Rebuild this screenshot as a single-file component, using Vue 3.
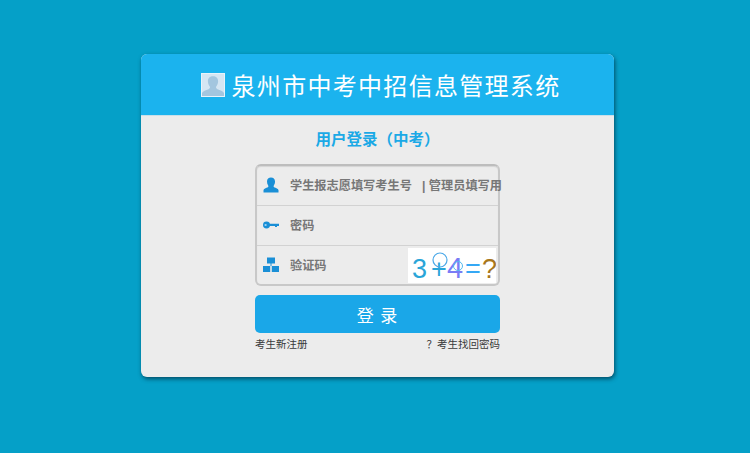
<template>
  <div class="page">
    <div class="card">
      <div class="card-head">
        <svg class="avatar" viewBox="0 0 24 24" width="24" height="24">
          <rect x="0.5" y="0.5" width="23" height="23" fill="#d5e6f3" stroke="#e8f3fa" />
          <path d="M1 23v-3c1-2 4-2.600 6.500-3.800 1.500-.7 1.700-1.700 1.300-2.700-1.300-1.500-1.900-3.300-1.900-5.500C6.900 5 9 3.200 12 3.200s5.100 1.800 5.100 4.800c0 2.200-.6 4-1.900 5.500-.4 1-.2 2 1.300 2.700 2.500 1.200 5.500 1.800 6.500 3.800v3z" fill="#a3c6df" />
        </svg>
        <h1>泉州市中考中招信息管理系统</h1>
      </div>
      <div class="card-body">
        <h2>用户登录（中考）</h2>
        <div class="form">
          <div class="fields">
            <div class="field">
              <svg class="icon" viewBox="0 0 16 16" width="16" height="16">
                <path d="M0.500 15.500v-2.300c0-1.500 2.600-2.300 4.500-3 .5-.5.500-1.100.2-1.700C4.400 7.500 4 6.200 4 4.600 4 2 5.700.5 8 .5s4 1.500 4 4.100c0 1.600-.4 2.900-1.200 3.900-.3.600-.3 1.200.2 1.700 1.900.7 4.500 1.500 4.500 3v2.300z" fill="#1a8fd6" />
              </svg>
              <span class="hint">学生报志愿填写考生号 &nbsp;&nbsp;| 管理员填写用</span>
            </div>
            <div class="field">
              <svg class="icon" viewBox="0 0 16 16" width="16" height="16">
                <ellipse cx="3.500" cy="8" rx="3.500" ry="3.400" fill="#1a8fd6" />
                <ellipse cx="2.600" cy="8" rx="1.200" ry="0.800" fill="#d8ecf8" />
                <path d="M6 6.800h10v2.200h-2v1h-2V9H6z" fill="#1a8fd6" />
              </svg>
              <span class="hint">密码</span>
            </div>
            <div class="field">
              <svg class="icon" viewBox="0 0 16 16" width="16" height="16">
                <rect x="4" y="0.500" width="8" height="6" fill="#1a8fd6" />
                <rect x="7.500" y="6" width="1" height="3" fill="#1a8fd6" />
                <rect x="0" y="9" width="7.200" height="6" fill="#1a8fd6" />
                <rect x="8.800" y="9" width="7.200" height="6" fill="#1a8fd6" />
              </svg>
              <span class="hint">验证码</span>
              <svg class="captcha" viewBox="0 0 88 36" width="88" height="36">
                <rect width="88" height="35" fill="#fff" />
                <text x="4" y="30" font-size="27" fill="#2aa5d8">3</text>
                <text x="23" y="30" font-size="27" fill="#2aa5d8">+</text>
                <circle cx="32" cy="12" r="7" fill="none" stroke="#4aa8e8" stroke-width="1.200" />
                <text x="39" y="30" font-size="29" fill="#7a7cf5">4</text>
                <circle cx="50" cy="18" r="4.500" fill="none" stroke="#54b8ee" stroke-width="1" />
                <text x="57" y="30" font-size="27" fill="#35a8f5">=</text>
                <text x="74" y="30" font-size="27" fill="#a8771c">?</text>
              </svg>
            </div>
          </div>
          <button class="submit" type="button">登 录</button>
          <div class="links">
            <a>考生新注册</a>
            <a>？考生找回密码</a>
          </div>
        </div>
      </div>
    </div>
  </div>
</template>

<script setup>
</script>

<style>
html,
body {
  margin: 0;
  background: #05a0c8;
}
</style>

<style scoped>
.page {
  height: 453px;
  box-sizing: border-box;
  padding: 54px 0 0 141px;
  overflow: hidden;
  font-family: "Liberation Sans", "Noto Sans CJK SC", sans-serif;
}

.card {
  width: 473px;
  height: 323px;
  background: #ececec;
  border-radius: 6px;
  box-shadow: 1px 2px 4px rgba(0, 50, 70, 0.75);
  overflow: hidden;
}

.card-head {
  height: 61px;
  background: #1bb3ee;
  border-bottom: 1px solid #c9dfe9;
  display: flex;
  align-items: center;
  justify-content: center;
  gap: 7px;
  padding-left: 6px;
}

.avatar {
  flex: none;
}

h1 {
  margin: 0;
  font-size: 24px;
  font-weight: 400;
  letter-spacing: 1.300px;
  color: #fff;
}

.card-body {
  display: flex;
  flex-direction: column;
  align-items: center;
}

h2 {
  margin: 14px 0 14px;
  font-size: 15.500px;
  line-height: 20px;
  font-weight: 700;
  color: #1ba9e6;
}

.form {
  width: 245px;
}

.fields {
  height: 122px;
  box-sizing: border-box;
  border: 2px solid #c8c8c8;
  border-top-color: #bdbdbd;
  border-radius: 6px;
  box-shadow: inset 0 1px 1px rgba(0, 0, 0, 0.1);
}

.field {
  height: 40px;
  box-sizing: border-box;
  display: flex;
  align-items: center;
  padding: 0 0 2px 6px;
  border-bottom: 1px solid #d2d2d2;
  position: relative;
  white-space: nowrap;
}

.field:last-child {
  border-bottom: 0;
}

.icon {
  flex: none;
  margin-right: 11px;
}

.hint {
  font-size: 12.200px;
  font-weight: 700;
  color: #777;
}

.captcha {
  position: absolute;
  right: 2px;
  top: 2px;
  font-family: "Liberation Sans", sans-serif;
}

.submit {
  display: block;
  width: 245px;
  height: 38px;
  margin-top: 9px;
  padding: 0;
  border: 0;
  border-radius: 5px;
  background: #1aa7e8;
  color: #fff;
  font-family: inherit;
  font-size: 17px;
  letter-spacing: 1px;
}

.links {
  display: flex;
  justify-content: space-between;
  margin-top: 4px;
  font-size: 10.500px;
  line-height: 14px;
  color: #3a3a3a;
}
</style>
